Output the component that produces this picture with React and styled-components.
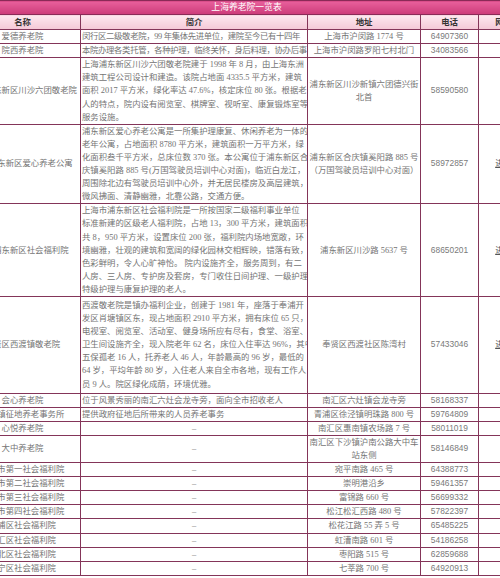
import React from 'react';
import styled, { createGlobalStyle } from 'styled-components';

const GlobalStyle = createGlobalStyle`
    html, body {
        margin: 0;
        padding: 0;
        background: #fff;
    }
    body {
        font-family: "Liberation Serif", "Noto Sans CJK SC", serif;
    }
`;

const Viewport = styled.div`
    width: 500px;
    height: 578px;
    overflow: hidden;
    background: #fff;
`;

const Table = styled.table`
    margin-left: -36px;
    width: 564px;
    table-layout: fixed;
    border-collapse: collapse;
    font-size: 8.4px;
    line-height: 13.1px;
    color: #747474;
`;

const TitleCell = styled.th`
    height: 12px;
    padding: 0;
    background: linear-gradient(#e8609c, #cc3b79);
    border: 1px solid #8a2a57;
    color: #fff;
    font-size: 8.8px;
    font-weight: normal;
    text-align: center;
    white-space: nowrap;
`;

const HeadCell = styled.th`
    height: 14px;
    padding: 0;
    background: linear-gradient(#fde8ef, #f4c8d7);
    border: 1px solid #843559;
    color: #333;
    font-weight: bold;
    text-align: center;
    white-space: nowrap;
    overflow: hidden;
`;

const Cell = styled.td`
    padding: ${(p) => p.$pad || '0'} 1px;
    border: 1px solid #843559;
    background: #fff;
    text-align: ${(p) => p.$align || 'center'};
    vertical-align: middle;
    white-space: nowrap;
    overflow: hidden;
    letter-spacing: ${(p) => (p.$tight ? '-0.35px' : '0')};
`;

const Phone = styled(Cell)`
    font-family: "Liberation Sans", Arial, sans-serif;
    color: #7a7a7a;
`;

const Link = styled.span`
    color: #555;
    text-decoration: underline;
`;

const Line = styled.div``;

const rows = [
    {
        name: '爱德养老院',
        tight: true,
        intro: ['闵行区二级敬老院，99 年集体先进单位，建院至今已有十四年'],
        addr: ['上海市沪闵路 1774 号'],
        phone: '64907360',
    },
    {
        name: '院西养老院',
        tight: true,
        intro: ['本院办理各类托管，各种护理，临终关怀，身后料理，协办后事'],
        addr: ['上海市沪闵路罗阳七村北门'],
        phone: '34083566',
    },
    {
        name: '上海浦东新区川沙六团敬老院',
        intro: [
            '上海浦东新区川沙六团敬老院建于 1998 年 8 月，由上海东洲',
            '建筑工程公司设计和建造。该院占地面 4335.5 平方米，建筑',
            '面积 2017 平方米，绿化率达 47.6%，核定床位 80 张。根据老',
            '人的特点，院内设有阅览室、棋牌室、视听室、康复锻炼室等',
            '服务设施。',
        ],
        addr: ['浦东新区川沙新镇六团德兴街', '北首'],
        phone: '58590580',
    },
    {
        name: '上海浦东新区爱心养老公寓',
        intro: [
            '浦东新区爱心养老公寓是一所集护理康复、休闲养老为一体的',
            '老年公寓，占地面积 8780 平方米，建筑面积一万平方米，绿',
            '化面积叁千平方米，总床位数 370 张。本公寓位于浦东新区合',
            '庆镇奚阳路 885 号(万国驾驶员培训中心对面)，临近白龙江，',
            '周围除北边有驾驶员培训中心外，并无居民楼房及高层建筑，',
            '微风拂面、清静幽雅，北靠公路，交通方便。',
        ],
        addr: ['浦东新区合庆镇奚阳路 885 号', '（万国驾驶员培训中心对面）'],
        phone: '58972857',
        link: true,
    },
    {
        name: '上海浦东新区社会福利院',
        intro: [
            '上海市浦东新区社会福利院是一所按国家二级福利事业单位',
            '标准新建的区级老人福利院，占地 13，300 平方米，建筑面积',
            '共 8，950 平方米，设置床位 200 张，福利院内场地宽敞，环',
            '境幽雅，壮观的建筑和宽阔的绿化园林交相辉映，错落有致，',
            '色彩鲜明，令人心旷神怡。 院内设施齐全，服务周到，有二',
            '人房、三人房、专护房及套房，专门收住日间护理、一级护理、',
            '特级护理与康复护理的老人。',
        ],
        addr: ['浦东新区川沙路 5637 号'],
        phone: '68650201',
        link: true,
    },
    {
        name: '奉贤区西渡镇敬老院',
        pad: '2px',
        intro: [
            '西渡敬老院是镇办福利企业，创建于 1981 年，座落于奉浦开',
            '发区肖塘镇区东，现占地面积 2910 平方米，拥有床位 65 只，',
            '电视室、阅览室、活动室、健身场所应有尽有，食堂、浴室、',
            '卫生间设施齐全，现入院老年 62 名，床位入住率达 96%，其中',
            '五保孤老 16 人，托养老人 46 人，年龄最高的 96 岁，最低的',
            '64 岁，平均年龄 80 岁，入住老人来自全市各地，现有工作人',
            '员 9 人。院区绿化成荫，环境优雅。',
        ],
        addr: ['奉贤区西渡社区陈湾村'],
        phone: '57433046',
        link: true,
    },
    {
        name: '会心养老院',
        intro: ['位于风景秀丽的南汇六灶会龙寺旁，面向全市招收老人'],
        addr: ['南汇区六灶镇会龙寺旁'],
        phone: '58168337',
    },
    {
        name: '徐泾镇征地养老事务所',
        intro: ['提供政府征地后所带来的人员养老事务'],
        addr: ['青浦区徐泾镇明珠路 800 号'],
        phone: '59764809',
    },
    { name: '心悦养老院', addr: ['南汇区惠南镇农场路 7 号'], phone: '58011019' },
    { name: '大中养老院', addr: ['南汇区下沙镇沪南公路大中车', '站东侧'], phone: '58146849' },
    { name: '上海市第一社会福利院', addr: ['宛平南路 465 号'], phone: '64388773' },
    { name: '上海市第二社会福利院', addr: ['崇明港沿乡'], phone: '59461357' },
    { name: '上海市第三社会福利院', addr: ['富锦路 660 号'], phone: '56699332' },
    { name: '上海市第四社会福利院', addr: ['松江松汇西路 480 号'], phone: '57822397' },
    { name: '杨浦区社会福利院', addr: ['松花江路 55 弄 5 号'], phone: '65485225' },
    { name: '徐汇区社会福利院', addr: ['虹漕南路 601 号'], phone: '54186258' },
    { name: '闸北区社会福利院', addr: ['枣阳路 515 号'], phone: '62859688' },
    { name: '长宁区社会福利院', addr: ['七莘路 700 号'], phone: '64920913' },
];

export default function App() {
    return (
        <Viewport>
            <GlobalStyle />
            <Table>
                <colgroup>
                    <col style={{ width: 116 }} />
                    <col style={{ width: 227 }} />
                    <col style={{ width: 113 }} />
                    <col style={{ width: 58 }} />
                    <col style={{ width: 50 }} />
                </colgroup>
                <thead>
                    <tr>
                        <TitleCell colSpan={5}>上海养老院一览表</TitleCell>
                    </tr>
                    <tr>
                        <HeadCell>名称</HeadCell>
                        <HeadCell>简介</HeadCell>
                        <HeadCell>地址</HeadCell>
                        <HeadCell>电话</HeadCell>
                        <HeadCell>网址</HeadCell>
                    </tr>
                </thead>
                <tbody>
                    {rows.map((r) => (
                        <tr key={r.phone}>
                            <Cell>{r.name}</Cell>
                            {r.intro ? (
                                <Cell $align="left" $pad={r.pad} $tight={r.tight}>
                                    {r.intro.map((l, i) => (
                                        <Line key={i}>{l}</Line>
                                    ))}
                                </Cell>
                            ) : (
                                <Cell>–</Cell>
                            )}
                            <Cell>
                                {r.addr.map((l, i) => (
                                    <Line key={i}>{l}</Line>
                                ))}
                            </Cell>
                            <Phone>{r.phone}</Phone>
                            <Cell>{r.link ? <Link>进入</Link> : null}</Cell>
                        </tr>
                    ))}
                </tbody>
            </Table>
        </Viewport>
    );
}
